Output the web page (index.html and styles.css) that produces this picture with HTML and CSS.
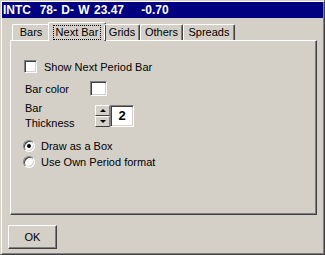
FILE: index.html
```html
<!DOCTYPE html>
<html lang="en">
<head>
    <meta charset="UTF-8">
    <title>INTC 78- D- W 23.47 -0.70</title>
    <link rel="stylesheet" href="styles.css">
</head>
<body>

    <div class="window">
        <div class="titlebar">INTC  78- D- W 23.47    -0.70</div>

        <div class="tabs">
            <div class="tab tab-bars">Bars</div>
            <div class="tab active tab-next"><span class="focus">Next Bar</span></div>
            <div class="tab tab-grids">Grids</div>
            <div class="tab tab-others">Others</div>
            <div class="tab tab-spreads">Spreads</div>
        </div>

        <div class="panel">
            <div class="check-row">
                <span class="checkbox"></span>
                <span>Show Next Period Bar</span>
            </div>

            <div class="field-row color-row">
                <span class="field-label">Bar color</span>
                <span class="swatch"></span>
            </div>

            <div class="field-row thick-row">
                <span class="field-label wide">Bar<br>Thickness</span>
                <span class="spinner">
                    <span class="spin-btn"><span class="arrow up"></span></span>
                    <span class="spin-btn"><span class="arrow down"></span></span>
                </span>
                <span class="edit">2</span>
            </div>

            <div class="radio-row first">
                <span class="radio checked"></span>
                <span>Draw as a Box</span>
            </div>
            <div class="radio-row">
                <span class="radio"></span>
                <span>Use Own Period format</span>
            </div>
        </div>

        <div class="footer">
            <button class="btn">OK</button>
        </div>
    </div>

</body>
</html>
```

FILE: styles.css
```css
/* Classic grey dialog */
body {
    margin: 0;
    font-family: "Liberation Sans", Arial, sans-serif;
    font-size: 11px;
    color: #000;
    background: #d4d0c8;
}

.window {
    width: 325px;
    height: 255px;
    box-sizing: border-box;
    background: #d4d0c8;
    border-top: 1px solid #d4d0c8;
    border-left: 1px solid #d4d0c8;
    border-right: 1px solid #404040;
    border-bottom: 1px solid #404040;
    box-shadow: inset 1px 1px #fff, inset -1px -1px #808080;
    padding: 1px;
}

.titlebar {
    height: 16px;
    line-height: 16px;
    background: #000080;
    color: #fff;
    font-size: 12px;
    font-weight: bold;
    white-space: pre;
    word-spacing: 1px;
    padding-left: 1px;
}

/* Tabs */
.tabs {
    display: flex;
    align-items: flex-end;
    height: 18px;
    margin-top: 4px;
    padding-left: 10px;
    position: relative;
    z-index: 1;
}

.tab {
    height: 16px;
    line-height: 15px;
    box-sizing: border-box;
    border-top: 1px solid #fff;
    border-left: 1px solid #fff;
    border-right: 1px solid #404040;
    box-shadow: inset -1px 0 #808080;
    border-radius: 2px 2px 0 0;
    text-align: center;
}

.tab-bars { width: 38px; }
.tab-grids { width: 36px; }
.tab-others { width: 43px; }
.tab-spreads { width: 52px; }

.tab.active {
    width: 58px;
    height: 19px;
    margin: 0 -2px -1px -2px;
    padding-top: 2px;
    line-height: 14px;
    background: #d4d0c8;
}

.focus {
    display: inline-block;
    padding: 0 2px;
    border: 1px dotted #000;
    line-height: 13px;
}

/* Page */
.panel {
    width: 307px;
    height: 175px;
    margin-left: 8px;
    box-sizing: border-box;
    border-top: 1px solid #fff;
    border-left: 1px solid #fff;
    border-right: 1px solid #404040;
    border-bottom: 1px solid #404040;
    box-shadow: inset -1px -1px #808080;
    padding: 19px 0 0 13px;
}

.check-row {
    display: flex;
    align-items: center;
    height: 13px;
}

.checkbox {
    width: 13px;
    height: 13px;
    box-sizing: border-box;
    background: #fff;
    border: 1px solid;
    border-color: #808080 #fff #fff #808080;
    box-shadow: inset 1px 1px #404040, inset -1px -1px #d4d0c8;
    margin-right: 7px;
}

.field-row {
    display: flex;
    align-items: center;
    margin-left: 1px;
}

.color-row {
    height: 15px;
    margin-top: 8px;
}

.field-label {
    width: 65px;
}

.field-label.wide {
    width: 70px;
    line-height: 15px;
}

.swatch {
    width: 17px;
    height: 15px;
    box-sizing: border-box;
    background: #fff;
    border: 1px solid;
    border-color: #808080 #fff #fff #808080;
    box-shadow: inset 1px 1px #404040, inset -1px -1px #d4d0c8;
}

.thick-row {
    margin-top: 5px;
}

.spinner {
    display: flex;
    flex-direction: column;
    width: 15px;
    height: 22px;
}

.spin-btn {
    height: 11px;
    box-sizing: border-box;
    border-top: 1px solid #fff;
    border-left: 1px solid #fff;
    border-bottom: 1px solid #404040;
    border-right: 1px solid #808080;
    display: flex;
    align-items: center;
    justify-content: center;
}

.arrow {
    width: 0;
    height: 0;
    border-left: 3px solid transparent;
    border-right: 3px solid transparent;
}

.arrow.up {
    border-bottom: 3px solid #000;
}

.arrow.down {
    border-top: 3px solid #000;
}

.edit {
    width: 24px;
    height: 22px;
    box-sizing: border-box;
    background: #fff;
    border: 1px solid;
    border-color: #808080 #fff #fff #808080;
    box-shadow: inset 1px 1px #404040, inset -1px -1px #d4d0c8;
    font-weight: bold;
    font-size: 13px;
    line-height: 20px;
    text-align: center;
}

.radio-row {
    display: flex;
    align-items: center;
    height: 16px;
    margin-left: -1px;
}

.radio-row.first {
    margin-top: 7px;
}

.radio {
    width: 12px;
    height: 12px;
    box-sizing: border-box;
    border-radius: 50%;
    background: #fff;
    border: 1px solid;
    border-color: #808080 #fff #fff #808080;
    box-shadow: inset 1px 1px #404040, inset -1px -1px #d4d0c8;
    margin-right: 6px;
    display: flex;
    align-items: center;
    justify-content: center;
}

.radio.checked::after {
    content: "";
    width: 4px;
    height: 4px;
    border-radius: 50%;
    background: #000;
}

/* Bottom buttons */
.footer {
    padding: 10px 0 0 6px;
}

.btn {
    width: 49px;
    height: 24px;
    margin: 0;
    padding: 0;
    font-family: inherit;
    font-size: 11px;
    color: #000;
    background: #d4d0c8;
    border-top: 1px solid #fff;
    border-left: 1px solid #fff;
    border-right: 1px solid #404040;
    border-bottom: 1px solid #404040;
    box-shadow: inset -1px -1px #808080;
}
```
